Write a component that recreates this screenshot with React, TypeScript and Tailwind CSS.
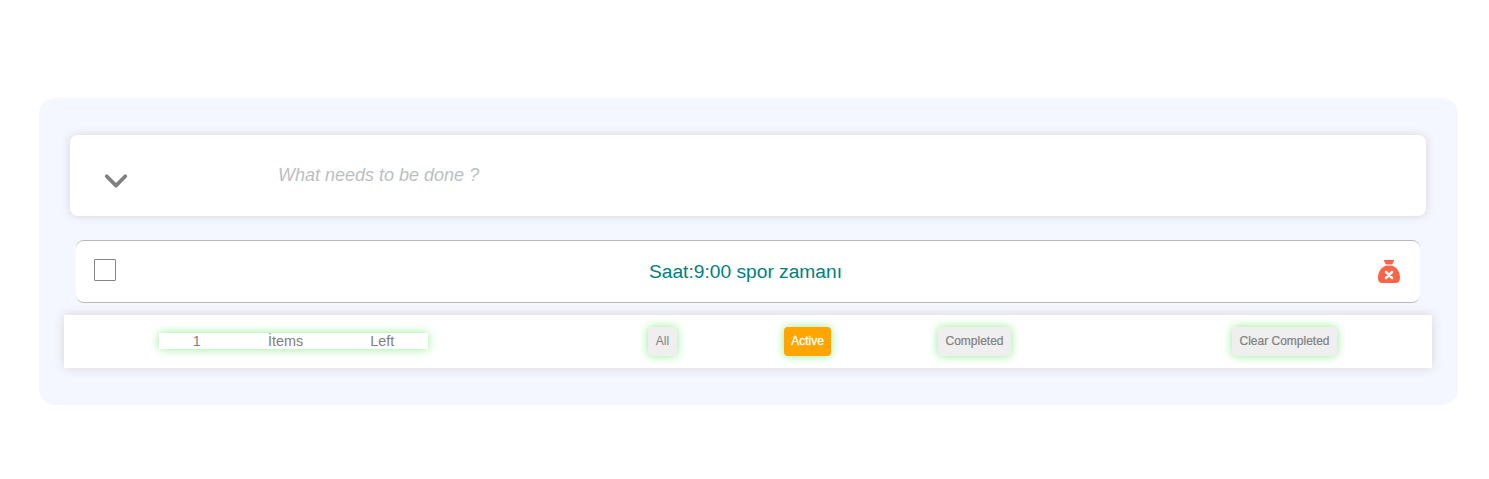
const glow = "shadow-[0_0_10px_lightgreen]";
const button = `h-[29px] shrink-0 rounded-[4px] text-center text-[12px] leading-[29px] whitespace-nowrap ${glow}`;

function ChevronIcon() {
  return (
    <svg width="24" height="16" viewBox="0 0 24 16" fill="none" stroke="currentColor" strokeWidth="3.7" strokeLinecap="round" strokeLinejoin="round">
      <path d="M2.700 3.200 12 12.600 21.300 3.200" />
    </svg>
  );
}

function SackIcon() {
  return (
    <svg width="22" height="23" viewBox="0 0 22 23" fill="currentColor" className="text-[#ff6347]">
      <path d="M6.6 0h8.800c.6 0 .9.500.6 1l-1.800 3.300H7.800L6 1C5.700 .5 6 0 6.600 0Z" />
      <path d="M7.800 4.300h6.400v1.500H7.800Z" opacity=".3" />
      <path d="M7.500 5.800h7C19.500 8 22 12.500 22 17.800 22 21.300 20.500 23 17.700 23H4.300C1.500 23 0 21.300 0 17.800 0 12.500 2.500 8 7.500 5.800Z" />
      <path d="m8 12 6 6m0-6-6 6" stroke="white" strokeWidth="2.500" strokeLinecap="round" />
    </svg>
  );
}

export default function App() {
  return (
    <div className="h-[479px] overflow-hidden bg-white pt-[98px] pl-[39px] font-['Liberation_Sans',Arial,sans-serif]">
      <main className="flex h-[307px] w-[1419px] flex-col rounded-[16px] bg-[#f4f7ff] px-[25px] pt-[37px]">
        <div className="ml-[6px] flex h-[81px] w-[1356px] items-center rounded-[8px] bg-white shadow-[0_0_10px_#d8d3d6]">
          <button className="mt-[10px] ml-[34px] text-[#808080]" aria-label="Toggle all">
            <ChevronIcon />
          </button>
          <input
            className="ml-[150px] w-[900px] text-[18px] text-[#757575] italic outline-none placeholder:text-[#bbbfc1]"
            placeholder="What needs to be done ?"
          />
        </div>

        <div className="mt-[24px] ml-[12px] flex h-[63px] w-[1344px] items-center rounded-[8px] border-y border-[#b9babc] bg-white pr-[20px] pl-[18px]">
          <input
            type="checkbox"
            aria-label="Complete"
            className="mb-[3px] size-[22px] appearance-none rounded-[1px] border border-[#858585] bg-white"
          />
          <span className="flex-1 pr-[3px] text-center text-[19.2px] leading-[22px] text-[#008080]">
            Saat:9:00 spor zamanı
          </span>
          <SackIcon />
        </div>

        <footer className="mt-[12px] flex h-[53px] w-[1368px] items-start bg-white text-[#808080] shadow-[0_0_10px_#d8d3d6]">
          <div className={`mt-[18px] ml-[95px] flex h-[16px] w-[269px] items-center justify-around text-[14.4px] leading-[16px] ${glow}`}>
            <span>1</span>
            <span>İtems</span>
            <span>Left</span>
          </div>
          <button className={`mt-[12px] ml-[220px] w-[29px] bg-[#efefef] ${button}`}>All</button>
          <button className={`mt-[12px] ml-[107px] w-[47px] bg-[#ffa500] text-white [-webkit-text-stroke:0.3px_white] ${button}`}>Active</button>
          <button className={`mt-[12px] ml-[107px] w-[73px] bg-[#efefef] [-webkit-text-stroke:0.2px_#808080] ${button}`}>Completed</button>
          <button className={`mt-[12px] ml-[221px] w-[105px] bg-[#efefef] [-webkit-text-stroke:0.2px_#808080] ${button}`}>Clear Completed</button>
        </footer>
      </main>
    </div>
  );
}
